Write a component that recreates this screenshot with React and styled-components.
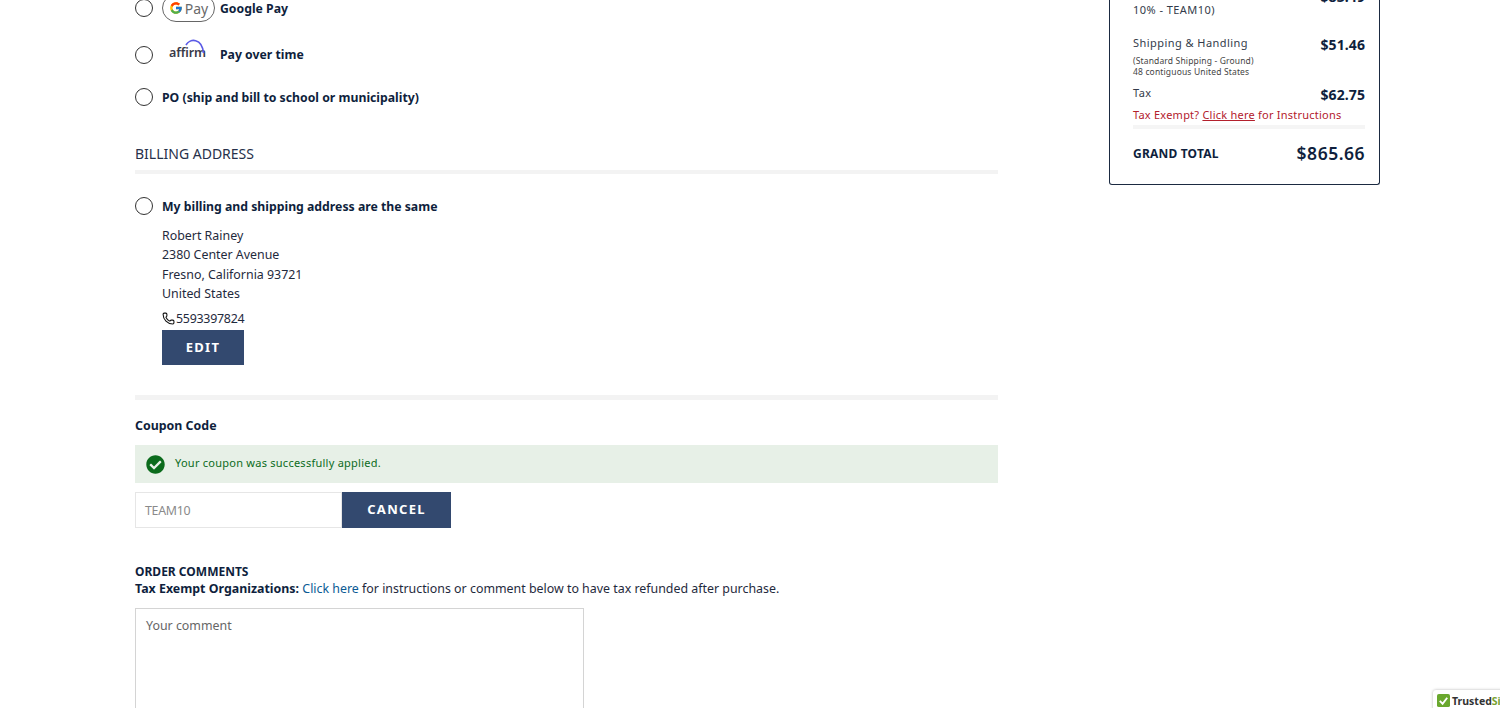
import styled, { createGlobalStyle } from "styled-components";
import { FcGoogle } from "react-icons/fc";
import { FaCheckCircle } from "react-icons/fa";
import { Phone } from "lucide-react";

const Global = createGlobalStyle`
  html, body { margin: 0; padding: 0; background: #fff; overflow: hidden; }
  body { font-family: "Noto Sans", "Open Sans", sans-serif; color: #0f1f3d; }
  * { box-sizing: border-box; }
`;

const Page = styled.div`
  position: relative;
  width: 1500px;
  height: 708px;
  overflow: hidden;
  padding: 0 120px 0 135px;
  display: flex;
  justify-content: space-between;
  align-items: flex-start;
`;

const Left = styled.main`
  width: 863px;
  margin-top: -6px;
`;

const Right = styled.aside`
  width: 271px;
  margin-top: -17px;
`;

const OptionRow = styled.label`
  display: flex;
  align-items: center;
  height: 28px;
  margin-bottom: ${(p) => p.$mb || 0}px;
`;

const Radio = styled.span`
  flex: none;
  width: 18px;
  height: 18px;
  border-radius: 50%;
  border: 1.5px solid #333;
  background: #fff;
  margin-right: 9px;
  margin-top: ${(p) => p.$mt || 0}px;
`;

const OptionText = styled.span`
  font-size: 12.25px;
  font-weight: 700;
  color: #0f1f3d;
  margin-top: ${(p) => p.$mt || 0}px;
`;

const GPayPill = styled.span`
  flex: none;
  width: 53px;
  height: 28px;
  margin-right: 5px;
  border: 1px solid #666;
  border-radius: 14px;
  display: flex;
  align-items: center;
  justify-content: center;
  gap: 2px;
  font-size: 14px;
  color: #6a6a6a;
  svg { flex: none; }
`;

const AffirmLogo = styled.span`
  flex: none;
  position: relative;
  width: 53px;
  margin-right: 5px;
  padding: 0 0 2px 7px;
  font-size: 12.5px;
  font-weight: 600;
  line-height: 12px;
  letter-spacing: -0.1px;
  color: #3a3a48;
  svg { position: absolute; left: 23px; top: -9px; }
`;

const SectionTitle = styled.h2`
  margin: 0;
  font-size: 14px;
  font-weight: 400;
  line-height: 20px;
  color: #26304a;
`;

const Rule = styled.div`
  height: ${(p) => p.$h || 4}px;
  margin-top: ${(p) => p.$mt || 0}px;
  background: #f3f3f3;
`;

const Address = styled.div`
  margin: 6px 0 0 27px;
  font-size: 12.4px;
  line-height: 19.3px;
  color: #1f2a3d;
`;

const PhoneLine = styled.div`
  display: flex;
  align-items: center;
  height: 20px;
  margin: 5px 0 2px 27px;
  font-size: 12.4px;
  color: #1f2a3d;
  letter-spacing: -0.25px;
  svg { margin-right: 1px; }
`;

const NavyButton = styled.button`
  display: block;
  border: 0;
  background: #33496f;
  color: #fff;
  font-family: inherit;
  font-weight: 700;
  font-size: 13px;
  letter-spacing: 1.3px;
  padding: 0 0 2px;
  width: ${(p) => p.$w}px;
  height: ${(p) => p.$h}px;
  margin-left: ${(p) => p.$ml || 0}px;
`;

const FieldLabel = styled.div`
  font-size: ${(p) => p.$size || 12.4}px;
  font-weight: 700;
  line-height: ${(p) => p.$lh || 18}px;
  margin-top: ${(p) => p.$mt || 0}px;
  color: #0f1f3d;
`;

const SuccessBox = styled.div`
  display: flex;
  align-items: center;
  gap: 10px;
  height: 38px;
  margin-top: 10px;
  padding-left: 11px;
  background: #e7f0e7;
  color: #0b6b1c;
  font-size: 11px;
  letter-spacing: 0.25px;
`;

const SuccessText = styled.span`
  padding-bottom: 3px;
`;

const CouponRow = styled.div`
  display: flex;
  margin-top: 9px;
  height: 36px;
`;

const CouponInput = styled.div`
  width: 207px;
  border: 1px solid #e6e6e6;
  padding-left: 9px;
  display: flex;
  align-items: center;
  font-size: 12.4px;
  letter-spacing: -0.3px;
  color: #8a8a8a;
`;

const Note = styled.div`
  font-size: 12.4px;
  line-height: 18px;
  color: #1f2a3d;
  b { color: #0f1f3d; }
  a { color: #0a5a94; text-decoration: none; }
`;

const CommentBox = styled.div`
  width: 449px;
  height: 140px;
  margin-top: 10px;
  border: 1px solid #d4d4d4;
  padding: 8px 10px;
  font-size: 12.4px;
  line-height: 18px;
  color: #666;
`;

const Card = styled.section`
  border: 1px solid #1b2a41;
  border-top: 0;
  border-radius: 0 0 3px 3px;
  padding: 0 14px 0 23px;
  height: 202px;
`;

const SummaryRow = styled.div`
  display: flex;
  justify-content: space-between;
  align-items: flex-start;
  margin-top: ${(p) => p.$mt || 0}px;
`;

const RowLabel = styled.div`
  font-size: 11px;
  line-height: 18px;
  letter-spacing: 0.45px;
  color: #333b4a;
`;

const RowAmount = styled.div`
  font-size: 14px;
  font-weight: 700;
  line-height: 20px;
  letter-spacing: 0.1px;
  color: #0f1f3d;
  margin-top: ${(p) => p.$mt || 1}px;
`;

const SmallNote = styled.div`
  font-size: 8.5px;
  line-height: 11px;
  letter-spacing: 0.15px;
  margin-top: 3px;
  color: #444;
`;

const TaxNote = styled.div`
  font-size: 11px;
  line-height: 18px;
  margin-top: 1px;
  color: #b3202c;
  letter-spacing: 0.23px;
  a { color: inherit; text-decoration: underline; }
`;

const ThinRule = styled.div`
  height: 4px;
  margin-top: 1px;
  background: #f5f5f5;
`;

const TotalRow = styled.div`
  display: flex;
  justify-content: space-between;
  align-items: center;
  height: 48px;
`;

const TotalLabel = styled.div`
  font-size: 12px;
  font-weight: 700;
  letter-spacing: 0.2px;
  color: #0f1f3d;
`;

const TotalAmount = styled.div`
  font-size: 17.5px;
  font-weight: 600;
  letter-spacing: 0.5px;
  color: #0f1f3d;
`;

const TrustBadge = styled.div`
  position: absolute;
  left: 1433px;
  top: 690px;
  width: 100px;
  height: 30px;
  padding: 4px 0 0 4px;
  display: flex;
  align-items: flex-start;
  gap: 2px;
  background: #fff;
  border-radius: 3px;
  box-shadow: 0 0 3px rgba(0, 0, 0, 0.3);
  font-size: 10.5px;
  font-weight: 700;
  line-height: 15px;
  color: #333;
  em { font-style: normal; color: #78a22f; }
`;

const App = () => {
  return (
    <>
      <Global />
      <Page>
        <Left>
          <OptionRow $mb={18}>
            <Radio />
            <GPayPill>
              <FcGoogle size={14} />
              Pay
            </GPayPill>
            <OptionText>Google Pay</OptionText>
          </OptionRow>
          <OptionRow $mb={15}>
            <Radio $mt={1} />
            <AffirmLogo>
              affirm
              <svg width="20" height="16" viewBox="0 0 20 16" fill="none">
                <path d="M1 7 C5 0 17 0 18.5 15" stroke="#5a5ae6" strokeWidth="1.7" />
              </svg>
            </AffirmLogo>
            <OptionText $mt={1}>Pay over time</OptionText>
          </OptionRow>
          <OptionRow $mb={33}>
            <Radio />
            <OptionText>PO (ship and bill to school or municipality)</OptionText>
          </OptionRow>
          <SectionTitle>BILLING ADDRESS</SectionTitle>
          <Rule $mt={6} />
          <OptionRow style={{ marginTop: 18 }}>
            <Radio />
            <OptionText>My billing and shipping address are the same</OptionText>
          </OptionRow>
          <Address>
            Robert Rainey
            <br />
            2380 Center Avenue
            <br />
            Fresno, California 93721
            <br />
            United States
          </Address>
          <PhoneLine>
            <Phone size={13} strokeWidth={2} color="#111" fill="none" />
            5593397824
          </PhoneLine>
          <NavyButton $w={82} $h={35} $ml={27}>
            EDIT
          </NavyButton>
          <Rule $mt={30} $h={5} />
          <FieldLabel $mt={17}>Coupon Code</FieldLabel>
          <SuccessBox>
            <FaCheckCircle size={19} color="#0b6b1c" />
            <SuccessText>Your coupon was successfully applied.</SuccessText>
          </SuccessBox>
          <CouponRow>
            <CouponInput>TEAM10</CouponInput>
            <NavyButton $w={109} $h={36}>
              CANCEL
            </NavyButton>
          </CouponRow>
          <FieldLabel $mt={35} $size={12} $lh={17}>ORDER COMMENTS</FieldLabel>
          <Note>
            <b>Tax Exempt Organizations:</b> <a href="#tax">Click here</a> for instructions or comment below to have tax refunded after purchase.
          </Note>
          <CommentBox>Your comment</CommentBox>
        </Left>
        <Right>
          <Card>
            <SummaryRow>
              <RowLabel>
                Discount (Coupon
                <br />
                10% - TEAM10)
              </RowLabel>
              <RowAmount $mt={4}>-$83.49</RowAmount>
            </SummaryRow>
            <SummaryRow $mt={15}>
              <div>
                <RowLabel>Shipping &amp; Handling</RowLabel>
                <SmallNote>
                  (Standard Shipping - Ground)
                  <br />
                  48 contiguous United States
                </SmallNote>
              </div>
              <RowAmount>$51.46</RowAmount>
            </SummaryRow>
            <SummaryRow $mt={7}>
              <RowLabel>Tax</RowLabel>
              <RowAmount>$62.75</RowAmount>
            </SummaryRow>
            <TaxNote>
              Tax Exempt? <a href="#tax">Click here</a> for Instructions
            </TaxNote>
            <ThinRule />
            <TotalRow>
              <TotalLabel>GRAND TOTAL</TotalLabel>
              <TotalAmount>$865.66</TotalAmount>
            </TotalRow>
          </Card>
        </Right>
        <TrustBadge>
          <svg width="13" height="13" viewBox="0 0 14 14">
            <rect x="0" y="0" width="14" height="14" rx="2" fill="#6aa82e" />
            <path d="M3 7.5 L6 10.5 L11 4" stroke="#fff" strokeWidth="2" fill="none" />
          </svg>
          <span>
            Trusted<em>Site</em>
          </span>
        </TrustBadge>
      </Page>
    </>
  );
};

export default App;
